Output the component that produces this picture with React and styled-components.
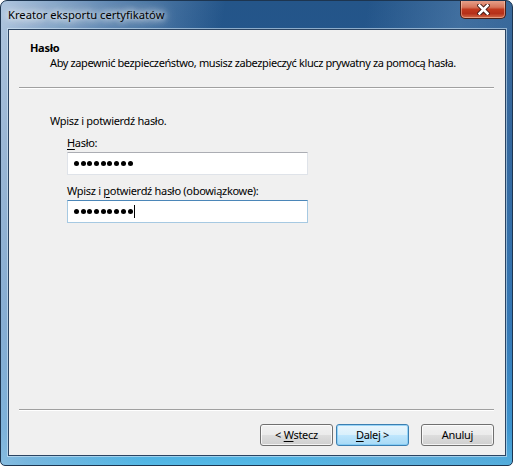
import React from "react"
import styled, { createGlobalStyle } from "styled-components"

const Global = createGlobalStyle`
    html, body {
        margin: 0;
        padding: 0;
        width: 513px;
        height: 466px;
        overflow: hidden;
        background: #ffffff;
    }
    * {
        box-sizing: border-box;
    }
`

const Frame = styled.div`
    width: 513px;
    height: 466px;
    display: flex;
    flex-direction: column;
    border: 1px solid #1d3550;
    border-radius: 7px 7px 5px 5px;
    font-family: "Noto Sans", "Open Sans", sans-serif;
    font-size: 11px;
    letter-spacing: -0.3px;
    color: #000;
    background:
        linear-gradient(100deg, rgba(190, 210, 232, 0.9) 0%, rgba(150, 182, 216, 0.55) 18%, rgba(40, 90, 145, 0) 38%, rgba(40, 90, 145, 0) 62%, rgba(120, 160, 200, 0.35) 78%, rgba(80, 130, 185, 0.2) 100%),
        linear-gradient(180deg, #245589 0%, #225891 30%, #2a73b3 70%, #3798d4 92%, #55b9e6 100%);
    overflow: hidden;
`

const TitleBar = styled.div`
    height: 28px;
    display: flex;
    align-items: flex-start;
    justify-content: space-between;
    padding-left: 7px;
`

const Caption = styled.span`
    margin-top: 7px;
    font-size: 11.2px;
    letter-spacing: 0;
    line-height: 14px;
    text-shadow: 0 0 6px #fff, 0 0 10px #fff, 0 0 14px rgba(255,255,255,0.8);
`

const CloseButton = styled.div`
    width: 46px;
    height: 19px;
    margin-top: -1px;
    margin-right: 6px;
    display: flex;
    align-items: center;
    justify-content: center;
    border: 1px solid #4a1f17;
    border-top: none;
    border-radius: 0 0 5px 5px;
    background: linear-gradient(180deg, #e9a58f 0%, #d7755b 40%, #c1391e 52%, #b5301a 75%, #d36b49 100%);
    box-shadow: inset 0 0 0 1px rgba(255, 220, 200, 0.45);
`

const Client = styled.div`
    flex: 1;
    margin: 0 6px 9px 7px;
    display: flex;
    flex-direction: column;
    background: #f0f0f0;
    border: 1px solid #2b4462;
    box-shadow: 0 0 0 1px rgba(210, 230, 245, 0.6);
`

const Header = styled.div`
    padding: 10px 0 0 21px;
    line-height: 15px;
`

const HeaderTitle = styled.div`
    font-weight: bold;
`

const HeaderText = styled.div`
    padding-left: 20px;
    letter-spacing: -0.39px;
`

const Separator = styled.div`
    margin: ${p => p.$top || 0}px 11px 0 10px;
    border-top: 1px solid #a0a0a0;
    border-bottom: 1px solid #ffffff;
`

const Body = styled.div`
    flex: 1;
    padding: 24px 0 0 41px;
    display: flex;
    flex-direction: column;
    line-height: 15px;
`

const Fields = styled.div`
    padding: 7px 0 0 17px;
    display: flex;
    flex-direction: column;
`

const Label = styled.div`
    margin-top: ${p => p.$top || 0}px;
`

const Field = styled.div`
    width: 241px;
    height: 23px;
    margin-top: 2px;
    display: flex;
    align-items: center;
    gap: 1.7px;
    padding-left: 6px;
    background: #fff;
    border: 1px solid ${p => p.$focused ? "#a6c9e2" : "#dfe3e9"};
    border-top-color: ${p => p.$focused ? "#4b86b8" : "#abadb3"};
`

const Dot = styled.span`
    width: 5px;
    height: 5px;
    border-radius: 50%;
    background: #000;
`

const Caret = styled.span`
    width: 1px;
    height: 13px;
    margin-left: 0.3px;
    background: #000;
`

const Footer = styled.div`
    display: flex;
    flex-direction: column;
`

const Buttons = styled.div`
    display: flex;
    justify-content: flex-end;
    padding: 13px 11px 9px 0;
    gap: 3px;
`

const Button = styled.div`
    width: 73px;
    height: 22px;
    margin-left: ${p => p.$gap || 0}px;
    display: flex;
    align-items: center;
    justify-content: center;
    border: 1px solid ${p => p.$default ? "#3c7fb1" : "#707070"};
    border-radius: 3px;
    background: ${p => p.$default
        ? "linear-gradient(180deg, #eaf6fd 0%, #d9f0fc 48%, #bee6fd 52%, #a7d9f5 100%)"
        : "linear-gradient(180deg, #f2f2f2 0%, #ebebeb 48%, #dddddd 52%, #cfcfcf 100%)"};
    box-shadow: inset 0 0 0 1px ${p => p.$default ? "rgba(120, 200, 245, 0.7)" : "rgba(255, 255, 255, 0.75)"};
    line-height: 14px;
    white-space: pre;
`

const Key = styled.span`
    text-decoration: underline;
    text-underline-offset: 2px;
`

const CloseIcon = () => (
    <svg width="13" height="11" viewBox="0 0 13 11">
        <path d="M2.5 1.5 L10.5 9.5 M10.5 1.5 L2.5 9.5" stroke="#3a1510" strokeWidth="4.4" strokeLinecap="square" />
        <path d="M2.5 1.5 L10.5 9.5 M10.5 1.5 L2.5 9.5" stroke="#ffffff" strokeWidth="2.6" strokeLinecap="square" />
    </svg>
)

const Dots = ({ count }) => (
    <>
        {Array.from({ length: count }).map((_, i) => <Dot key={i} />)}
    </>
)

const App = () => {
    return (
        <>
            <Global />
            <Frame>
                <TitleBar>
                    <Caption>Kreator eksportu certyfikatów</Caption>
                    <CloseButton><CloseIcon /></CloseButton>
                </TitleBar>
                <Client>
                    <Header>
                        <HeaderTitle>Hasło</HeaderTitle>
                        <HeaderText>Aby zapewnić bezpieczeństwo, musisz zabezpieczyć klucz prywatny za pomocą hasła.</HeaderText>
                    </Header>
                    <Separator $top={17} />
                    <Body>
                        <div>Wpisz i potwierdź hasło.</div>
                        <Fields>
                            <Label><Key>H</Key>asło:</Label>
                            <Field><Dots count={9} /></Field>
                            <Label $top={8}>Wpisz i <Key>p</Key>otwierdź hasło (obowiązkowe):</Label>
                            <Field $focused><Dots count={9} /><Caret /></Field>
                        </Fields>
                    </Body>
                    <Footer>
                        <Separator />
                        <Buttons>
                            <Button><span>&lt; <Key>W</Key>stecz</span></Button>
                            <Button $default><span><Key>D</Key>alej &gt;</span></Button>
                            <Button $gap={9}>Anuluj</Button>
                        </Buttons>
                    </Footer>
                </Client>
            </Frame>
        </>
    )
}

export default App
